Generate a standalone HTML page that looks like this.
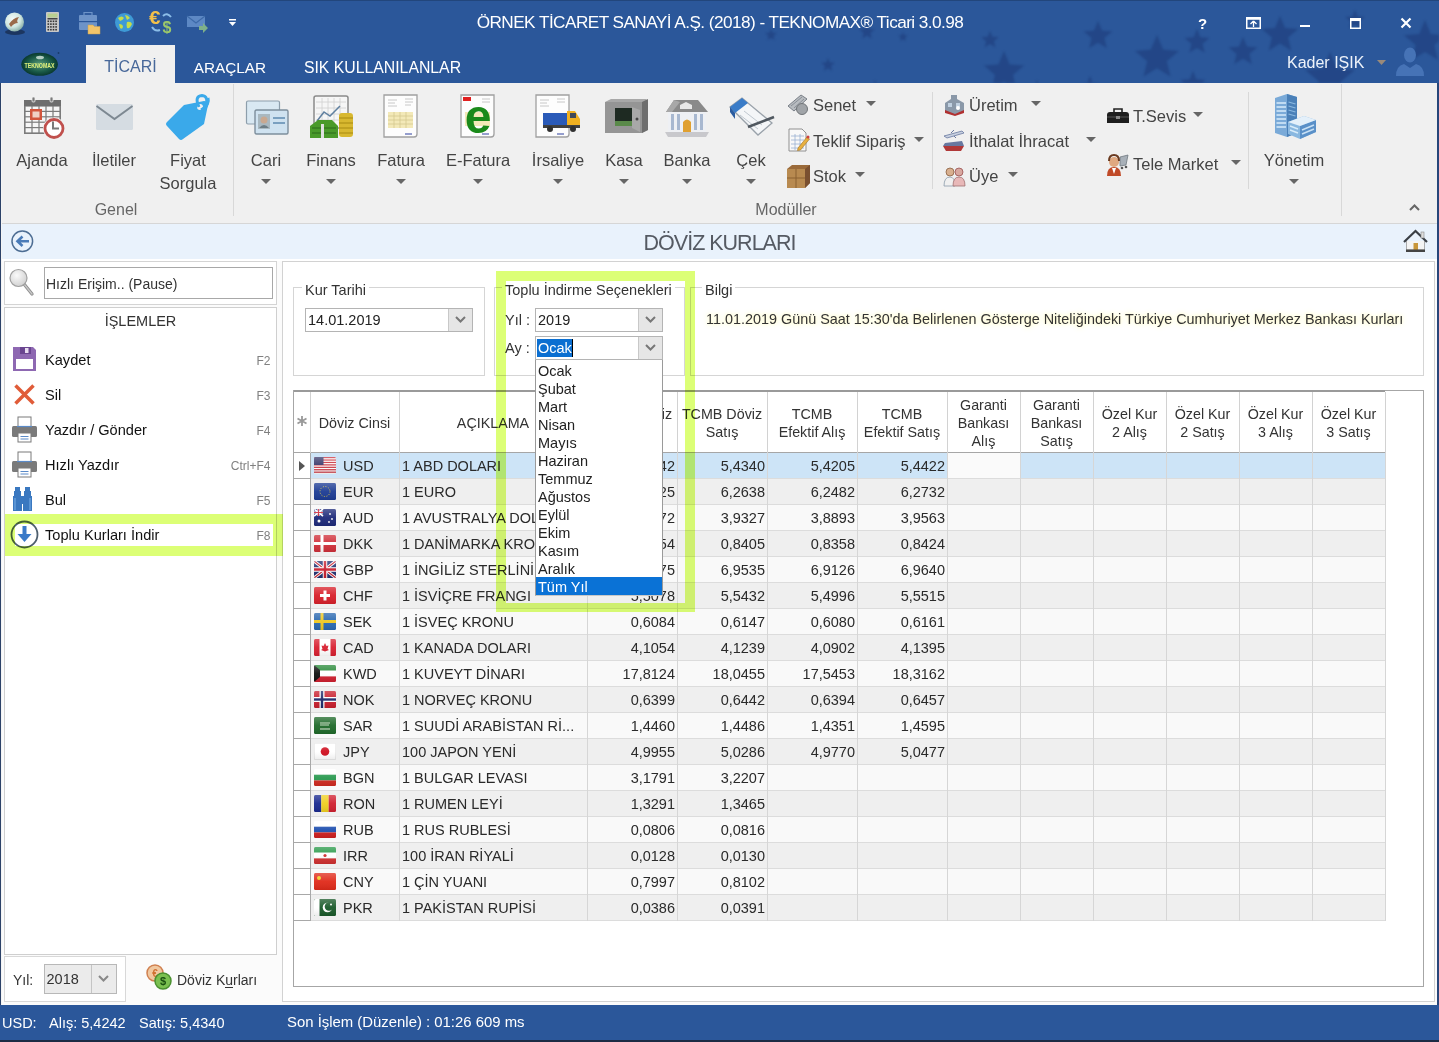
<!DOCTYPE html><html><head><meta charset="utf-8"><style>
html,body{margin:0;padding:0}
body{width:1439px;height:1042px;overflow:hidden;position:relative;background:#fff;font-family:"Liberation Sans",sans-serif}
.t{position:absolute;white-space:nowrap;line-height:1}
.r{position:absolute;box-sizing:border-box}
</style></head><body>
<div class="r" style="left:0px;top:0px;width:1439px;height:83px;background:#2b579a"></div>
<div class="r" style="left:0px;top:0px;width:1439px;height:1px;background:#22467c"></div>
<svg class="r" style="left:0px;top:0px;filter:blur(0.8px)" width="1439" height="83" viewBox="0 0 1439 83"><polygon points="771.0,29.0 772.6,32.8 776.7,33.1 773.6,35.8 774.5,39.9 771.0,37.7 767.5,39.9 768.4,35.8 765.3,33.1 769.4,32.8" fill="rgba(20,40,100,0.35)"/><polygon points="828.0,58.0 829.9,62.5 834.7,62.8 831.0,66.0 832.1,70.7 828.0,68.2 823.9,70.7 825.0,66.0 821.3,62.8 826.1,62.5" fill="rgba(20,40,100,0.35)"/><polygon points="875.0,80.0 876.6,83.8 880.7,84.1 877.6,86.8 878.5,90.9 875.0,88.7 871.5,90.9 872.4,86.8 869.3,84.1 873.4,83.8" fill="rgba(20,40,100,0.35)"/><polygon points="867.0,24.0 869.1,29.1 874.6,29.5 870.4,33.1 871.7,38.5 867.0,35.6 862.3,38.5 863.6,33.1 859.4,29.5 864.9,29.1" fill="rgba(20,40,100,0.35)"/><polygon points="903.0,32.0 904.3,35.2 907.8,35.5 905.1,37.7 905.9,41.0 903.0,39.2 900.1,41.0 900.9,37.7 898.2,35.5 901.7,35.2" fill="rgba(20,40,100,0.35)"/><polygon points="990.0,31.0 992.4,36.7 998.6,37.2 993.9,41.3 995.3,47.3 990.0,44.0 984.7,47.3 986.1,41.3 981.4,37.2 987.6,36.7" fill="rgba(20,40,100,0.35)"/><polygon points="1098.0,21.0 1102.0,30.5 1112.3,31.4 1104.4,38.1 1106.8,48.1 1098.0,42.8 1089.2,48.1 1091.6,38.1 1083.7,31.4 1094.0,30.5" fill="rgba(20,40,100,0.35)"/><polygon points="1157.0,35.0 1163.1,49.6 1178.9,50.9 1166.8,61.2 1170.5,76.6 1157.0,68.3 1143.5,76.6 1147.2,61.2 1135.1,50.9 1150.9,49.6" fill="rgba(20,40,100,0.35)"/><polygon points="1197.0,29.0 1200.4,37.3 1209.4,38.0 1202.6,43.8 1204.6,52.5 1197.0,47.9 1189.4,52.5 1191.4,43.8 1184.6,38.0 1193.6,37.3" fill="rgba(20,40,100,0.35)"/><polygon points="1004.0,51.0 1009.6,64.4 1024.0,65.5 1013.0,74.9 1016.3,89.0 1004.0,81.5 991.7,89.0 995.0,74.9 984.0,65.5 998.4,64.4" fill="rgba(20,40,100,0.35)"/><polygon points="1243.0,37.0 1247.0,46.5 1257.3,47.4 1249.4,54.1 1251.8,64.1 1243.0,58.8 1234.2,64.1 1236.6,54.1 1228.7,47.4 1239.0,46.5" fill="rgba(20,40,100,0.35)"/><polygon points="1280.0,16.0 1285.0,28.1 1298.1,29.1 1288.1,37.6 1291.2,50.4 1280.0,43.5 1268.8,50.4 1271.9,37.6 1261.9,29.1 1275.0,28.1" fill="rgba(20,40,100,0.35)"/><polygon points="1355.0,10.0 1357.6,16.4 1364.5,16.9 1359.3,21.4 1360.9,28.1 1355.0,24.5 1349.1,28.1 1350.7,21.4 1345.5,16.9 1352.4,16.4" fill="rgba(20,40,100,0.35)"/><polygon points="1330.0,52.0 1336.9,68.5 1354.7,70.0 1341.1,81.6 1345.3,99.0 1330.0,89.7 1314.7,99.0 1318.9,81.6 1305.3,70.0 1323.1,68.5" fill="rgba(20,40,100,0.35)"/><polygon points="1425.0,20.0 1430.8,34.0 1445.9,35.2 1434.4,45.1 1437.9,59.8 1425.0,51.9 1412.1,59.8 1415.6,45.1 1404.1,35.2 1419.2,34.0" fill="rgba(20,40,100,0.35)"/><polygon points="1193.0,71.0 1196.4,79.3 1205.4,80.0 1198.6,85.8 1200.6,94.5 1193.0,89.8 1185.4,94.5 1187.4,85.8 1180.6,80.0 1189.6,79.3" fill="rgba(20,40,100,0.35)"/><polygon points="1090.0,76.0 1092.6,82.4 1099.5,82.9 1094.3,87.4 1095.9,94.1 1090.0,90.5 1084.1,94.1 1085.7,87.4 1080.5,82.9 1087.4,82.4" fill="rgba(20,40,100,0.35)"/><polygon points="1037.0,80.0 1038.6,83.8 1042.7,84.1 1039.6,86.8 1040.5,90.9 1037.0,88.7 1033.5,90.9 1034.4,86.8 1031.3,84.1 1035.4,83.8" fill="rgba(20,40,100,0.35)"/></svg>
<div class="r" style="left:86px;top:45px;width:89px;height:38px;background:#f0f0f0"></div>
<div class="t" style="left:-169.50px;width:600px;text-align:center;top:59.46px;font-size:16px;color:#48689a;">TİCARİ</div>
<div class="t" style="left:-70.00px;width:600px;text-align:center;top:60.05px;font-size:15.3px;color:#fff;">ARAÇLAR</div>
<div class="t" style="left:82.50px;width:600px;text-align:center;top:59.63px;font-size:15.8px;color:#fff;">SIK KULLANILANLAR</div>
<div class="t" style="left:1287px;top:55.46px;font-size:16px;color:#eef3fa;">Kader IŞIK</div>
<svg class="r" style="left:1377.0px;top:60px;" width="9" height="5" viewBox="0 0 9 5"><path d="M0 0 L9 0 L4.5 5 Z" fill="#9a8a7a"/></svg>
<div class="t" style="left:320.00px;width:800px;text-align:center;top:14.44px;font-size:17.2px;color:#fff;letter-spacing:-0.55px">ÖRNEK TİCARET SANAYİ A.Ş. (2018) - TEKNOMAX® Ticari 3.0.98</div>
<div class="r" style="left:0px;top:83px;width:1439px;height:141px;background:#f0f0f0"></div>
<div class="r" style="left:0px;top:223px;width:1439px;height:1px;background:#d6d6d6"></div>
<div class="r" style="left:0px;top:83px;width:1px;height:959px;background:#2c4268"></div>
<div class="r" style="left:1px;top:83px;width:1px;height:922px;background:#f4f4f4"></div>
<div class="r" style="left:1437px;top:83px;width:2px;height:959px;background:#27467a"></div>
<div class="t" style="left:-258.00px;width:600px;text-align:center;top:152.03px;font-size:16.5px;color:#444;">Ajanda</div>
<div class="t" style="left:-186.00px;width:600px;text-align:center;top:152.03px;font-size:16.5px;color:#444;">İletiler</div>
<div class="t" style="left:-34.00px;width:600px;text-align:center;top:152.03px;font-size:16.5px;color:#444;">Cari</div>
<div class="t" style="left:31.00px;width:600px;text-align:center;top:152.03px;font-size:16.5px;color:#444;">Finans</div>
<div class="t" style="left:101.00px;width:600px;text-align:center;top:152.03px;font-size:16.5px;color:#444;">Fatura</div>
<div class="t" style="left:178.00px;width:600px;text-align:center;top:152.03px;font-size:16.5px;color:#444;">E-Fatura</div>
<div class="t" style="left:258.00px;width:600px;text-align:center;top:152.03px;font-size:16.5px;color:#444;">İrsaliye</div>
<div class="t" style="left:324.00px;width:600px;text-align:center;top:152.03px;font-size:16.5px;color:#444;">Kasa</div>
<div class="t" style="left:387.00px;width:600px;text-align:center;top:152.03px;font-size:16.5px;color:#444;">Banka</div>
<div class="t" style="left:451.00px;width:600px;text-align:center;top:152.03px;font-size:16.5px;color:#444;">Çek</div>
<div class="t" style="left:994.00px;width:600px;text-align:center;top:152.03px;font-size:16.5px;color:#444;">Yönetim</div>
<svg class="r" style="left:261.0px;top:179px;" width="10" height="5" viewBox="0 0 10 5"><path d="M0 0 L10 0 L5.0 5 Z" fill="#666"/></svg>
<svg class="r" style="left:326.0px;top:179px;" width="10" height="5" viewBox="0 0 10 5"><path d="M0 0 L10 0 L5.0 5 Z" fill="#666"/></svg>
<svg class="r" style="left:396.0px;top:179px;" width="10" height="5" viewBox="0 0 10 5"><path d="M0 0 L10 0 L5.0 5 Z" fill="#666"/></svg>
<svg class="r" style="left:473.0px;top:179px;" width="10" height="5" viewBox="0 0 10 5"><path d="M0 0 L10 0 L5.0 5 Z" fill="#666"/></svg>
<svg class="r" style="left:553.0px;top:179px;" width="10" height="5" viewBox="0 0 10 5"><path d="M0 0 L10 0 L5.0 5 Z" fill="#666"/></svg>
<svg class="r" style="left:619.0px;top:179px;" width="10" height="5" viewBox="0 0 10 5"><path d="M0 0 L10 0 L5.0 5 Z" fill="#666"/></svg>
<svg class="r" style="left:682.0px;top:179px;" width="10" height="5" viewBox="0 0 10 5"><path d="M0 0 L10 0 L5.0 5 Z" fill="#666"/></svg>
<svg class="r" style="left:746.0px;top:179px;" width="10" height="5" viewBox="0 0 10 5"><path d="M0 0 L10 0 L5.0 5 Z" fill="#666"/></svg>
<svg class="r" style="left:1289.0px;top:179px;" width="10" height="5" viewBox="0 0 10 5"><path d="M0 0 L10 0 L5.0 5 Z" fill="#666"/></svg>
<div class="t" style="left:-112.00px;width:600px;text-align:center;top:152.03px;font-size:16.5px;color:#444;">Fiyat</div>
<div class="t" style="left:-112.00px;width:600px;text-align:center;top:175.03px;font-size:16.5px;color:#444;">Sorgula</div>
<div class="t" style="left:-184.00px;width:600px;text-align:center;top:202.46px;font-size:16px;color:#666;">Genel</div>
<div class="t" style="left:486.00px;width:600px;text-align:center;top:202.46px;font-size:16px;color:#666;">Modüller</div>
<div class="r" style="left:233px;top:84px;width:1px;height:132px;background:#d8d8d8"></div>
<div class="r" style="left:932px;top:92px;width:1px;height:97px;background:#d8d8d8"></div>
<div class="r" style="left:1248px;top:92px;width:1px;height:97px;background:#d8d8d8"></div>
<div class="r" style="left:1341px;top:84px;width:1px;height:132px;background:#d8d8d8"></div>
<div class="t" style="left:813px;top:97.03px;font-size:16.5px;color:#444;">Senet</div>
<svg class="r" style="left:866.0px;top:101px;" width="10" height="5" viewBox="0 0 10 5"><path d="M0 0 L10 0 L5.0 5 Z" fill="#666"/></svg>
<div class="t" style="left:813px;top:133.03px;font-size:16.5px;color:#444;">Teklif Sipariş</div>
<svg class="r" style="left:914.0px;top:137px;" width="10" height="5" viewBox="0 0 10 5"><path d="M0 0 L10 0 L5.0 5 Z" fill="#666"/></svg>
<div class="t" style="left:813px;top:168.03px;font-size:16.5px;color:#444;">Stok</div>
<svg class="r" style="left:855.0px;top:172px;" width="10" height="5" viewBox="0 0 10 5"><path d="M0 0 L10 0 L5.0 5 Z" fill="#666"/></svg>
<div class="t" style="left:969px;top:97.03px;font-size:16.5px;color:#444;">Üretim</div>
<svg class="r" style="left:1031.0px;top:101px;" width="10" height="5" viewBox="0 0 10 5"><path d="M0 0 L10 0 L5.0 5 Z" fill="#666"/></svg>
<div class="t" style="left:969px;top:133.03px;font-size:16.5px;color:#444;">İthalat İhracat</div>
<svg class="r" style="left:1086.0px;top:137px;" width="10" height="5" viewBox="0 0 10 5"><path d="M0 0 L10 0 L5.0 5 Z" fill="#666"/></svg>
<div class="t" style="left:969px;top:168.03px;font-size:16.5px;color:#444;">Üye</div>
<svg class="r" style="left:1008.0px;top:172px;" width="10" height="5" viewBox="0 0 10 5"><path d="M0 0 L10 0 L5.0 5 Z" fill="#666"/></svg>
<div class="t" style="left:1133px;top:108.03px;font-size:16.5px;color:#444;">T.Sevis</div>
<svg class="r" style="left:1193.0px;top:112px;" width="10" height="5" viewBox="0 0 10 5"><path d="M0 0 L10 0 L5.0 5 Z" fill="#666"/></svg>
<div class="t" style="left:1133px;top:156.03px;font-size:16.5px;color:#444;">Tele Market</div>
<svg class="r" style="left:1231.0px;top:160px;" width="10" height="5" viewBox="0 0 10 5"><path d="M0 0 L10 0 L5.0 5 Z" fill="#666"/></svg>
<svg class="r" style="left:1409px;top:204px;" width="11" height="7" viewBox="0 0 11 7"><path d="M1 6 L5.5 1.5 L10 6" stroke="#666" stroke-width="2" fill="none"/></svg>
<div class="r" style="left:2px;top:224px;width:1435px;height:35px;background:#e9f2fc"></div>
<div class="t" style="left:419.50px;width:600px;text-align:center;top:232.80px;font-size:21.5px;color:#555a63;letter-spacing:-1px">DÖVİZ KURLARI</div>
<div class="r" style="left:2px;top:261px;width:1435px;height:744px;background:#fbfbfb"></div>
<div class="r" style="left:4px;top:261px;width:273px;height:44px;background:#fff;border:1px solid #d4d4d4"></div>
<div class="r" style="left:44px;top:267px;width:229px;height:32px;background:#fff;border:1px solid #a8a8a8"></div>
<div class="t" style="left:46px;top:277.15px;font-size:14px;color:#333;">Hızlı Erişim.. (Pause)</div>
<div class="r" style="left:4px;top:307px;width:273px;height:648px;background:#fff;border:1px solid #cfcfcf"></div>
<div class="t" style="left:-159.50px;width:600px;text-align:center;top:313.73px;font-size:14.5px;color:#333;">İŞLEMLER</div>
<div class="t" style="left:45px;top:352.64px;font-size:14.6px;color:#111;">Kaydet</div>
<div class="t" style="left:-329.50px;width:600px;text-align:right;top:354.84px;font-size:12px;color:#808080;">F2</div>
<div class="t" style="left:45px;top:387.64px;font-size:14.6px;color:#111;">Sil</div>
<div class="t" style="left:-329.50px;width:600px;text-align:right;top:389.84px;font-size:12px;color:#808080;">F3</div>
<div class="t" style="left:45px;top:422.64px;font-size:14.6px;color:#111;">Yazdır / Gönder</div>
<div class="t" style="left:-329.50px;width:600px;text-align:right;top:424.84px;font-size:12px;color:#808080;">F4</div>
<div class="t" style="left:45px;top:457.64px;font-size:14.6px;color:#111;">Hızlı Yazdır</div>
<div class="t" style="left:-329.50px;width:600px;text-align:right;top:459.84px;font-size:12px;color:#808080;">Ctrl+F4</div>
<div class="t" style="left:45px;top:492.64px;font-size:14.6px;color:#111;">Bul</div>
<div class="t" style="left:-329.50px;width:600px;text-align:right;top:494.84px;font-size:12px;color:#808080;">F5</div>
<div class="t" style="left:45px;top:527.64px;font-size:14.6px;color:#111;">Toplu Kurları İndir</div>
<div class="t" style="left:-329.50px;width:600px;text-align:right;top:529.84px;font-size:12px;color:#808080;">F8</div>
<div class="r" style="left:4px;top:956px;width:122px;height:46px;background:#fff;border:1px solid #d8d8d8"></div>
<div class="t" style="left:13px;top:973.15px;font-size:14px;color:#333;">Yıl:</div>
<div class="t" style="left:177px;top:973.15px;font-size:14px;color:#333;">Döviz Kurları</div>
<div class="r" style="left:282px;top:261px;width:1153px;height:741px;background:#fff;border:1px solid #d2d2d2"></div>
<div class="r" style="left:293px;top:287px;width:192px;height:89px;border:1px solid #d5d5d5"></div>
<div class="t" style="left:305px;top:282.73px;font-size:14.5px;color:#333;background:#fff;padding:0 3px;margin-left:-3px">Kur Tarihi</div>
<div class="r" style="left:494px;top:287px;width:191px;height:89px;border:1px solid #d5d5d5"></div>
<div class="t" style="left:505px;top:282.73px;font-size:14.5px;color:#333;background:#fff;padding:0 3px;margin-left:-3px">Toplu İndirme Seçenekleri</div>
<div class="r" style="left:690px;top:287px;width:734px;height:89px;border:1px solid #d5d5d5"></div>
<div class="t" style="left:705px;top:282.73px;font-size:14.5px;color:#333;background:#fff;padding:0 3px;margin-left:-3px">Bilgi</div>
<div class="r" style="left:305px;top:308px;width:168px;height:24px;background:#fff;border:1px solid #b4b4b4"></div>
<div class="r" style="left:448px;top:309px;width:24px;height:22px;background:#e6e6e6;border-left:1px solid #c8c8c8"></div>
<svg class="r" style="left:455px;top:316px;" width="11" height="7" viewBox="0 0 11 7"><path d="M1 1 L5.5 5.5 L10 1" stroke="#777" stroke-width="2" fill="none"/></svg>
<div class="t" style="left:308px;top:312.73px;font-size:14.5px;color:#222;">14.01.2019</div>
<div class="t" style="left:505px;top:312.73px;font-size:14.5px;color:#333;">Yıl :</div>
<div class="r" style="left:535px;top:308px;width:128px;height:24px;background:#fff;border:1px solid #b4b4b4"></div>
<div class="r" style="left:638px;top:309px;width:24px;height:22px;background:#e6e6e6;border-left:1px solid #c8c8c8"></div>
<svg class="r" style="left:645px;top:316px;" width="11" height="7" viewBox="0 0 11 7"><path d="M1 1 L5.5 5.5 L10 1" stroke="#777" stroke-width="2" fill="none"/></svg>
<div class="t" style="left:538px;top:312.73px;font-size:14.5px;color:#222;">2019</div>
<div class="t" style="left:505px;top:340.73px;font-size:14.5px;color:#333;">Ay :</div>
<div class="r" style="left:535px;top:336px;width:128px;height:24px;background:#fff;border:1px solid #b4b4b4"></div>
<div class="r" style="left:638px;top:337px;width:24px;height:22px;background:#e6e6e6;border-left:1px solid #c8c8c8"></div>
<svg class="r" style="left:645px;top:344px;" width="11" height="7" viewBox="0 0 11 7"><path d="M1 1 L5.5 5.5 L10 1" stroke="#777" stroke-width="2" fill="none"/></svg>
<div class="r" style="left:537px;top:339px;width:35px;height:18px;background:#0b6fd1"></div>
<div class="r" style="left:572px;top:339px;width:1px;height:18px;background:#000"></div>
<div class="t" style="left:538px;top:340.73px;font-size:14.5px;color:#fff;">Ocak</div>
<div class="t" style="left:706px;top:311.81px;font-size:14.4px;color:#333;text-shadow:0 0 3px #fff8c8,0 0 6px #fffad0,0 0 10px #fffbd8">11.01.2019 Günü Saat 15:30&#x27;da Belirlenen Gösterge Niteliğindeki Türkiye Cumhuriyet Merkez Bankası Kurları</div>
<div class="r" style="left:293px;top:390px;width:1131px;height:597px;background:#fff;border:1px solid #a6a6a6"></div>
<div class="r" style="left:294px;top:452px;width:1091px;height:1px;background:#a6a6a6"></div>
<div class="r" style="left:294px;top:390px;width:1091px;height:2px;background:#9a9a9a"></div>
<div class="r" style="left:310px;top:392px;width:1px;height:61px;background:#d2d2d2"></div>
<div class="r" style="left:399px;top:392px;width:1px;height:61px;background:#d2d2d2"></div>
<div class="r" style="left:587px;top:392px;width:1px;height:61px;background:#d2d2d2"></div>
<div class="r" style="left:677px;top:392px;width:1px;height:61px;background:#d2d2d2"></div>
<div class="r" style="left:767px;top:392px;width:1px;height:61px;background:#d2d2d2"></div>
<div class="r" style="left:857px;top:392px;width:1px;height:61px;background:#d2d2d2"></div>
<div class="r" style="left:947px;top:392px;width:1px;height:61px;background:#d2d2d2"></div>
<div class="r" style="left:1020px;top:392px;width:1px;height:61px;background:#d2d2d2"></div>
<div class="r" style="left:1093px;top:392px;width:1px;height:61px;background:#d2d2d2"></div>
<div class="r" style="left:1166px;top:392px;width:1px;height:61px;background:#d2d2d2"></div>
<div class="r" style="left:1239px;top:392px;width:1px;height:61px;background:#d2d2d2"></div>
<div class="r" style="left:1312px;top:392px;width:1px;height:61px;background:#d2d2d2"></div>
<div class="r" style="left:1385px;top:392px;width:1px;height:61px;background:#d2d2d2"></div>
<div class="t" style="left:254.50px;width:200px;text-align:center;top:415.90px;font-size:14.3px;color:#333;">Döviz Cinsi</div>
<div class="t" style="left:393.00px;width:200px;text-align:center;top:415.90px;font-size:14.3px;color:#333;">AÇIKLAMA</div>
<div class="t" style="left:532.00px;width:200px;text-align:center;top:406.90px;font-size:14.3px;color:#333;">TCMB Döviz</div>
<div class="t" style="left:532.00px;width:200px;text-align:center;top:424.90px;font-size:14.3px;color:#333;">Alış</div>
<div class="t" style="left:622.00px;width:200px;text-align:center;top:406.90px;font-size:14.3px;color:#333;">TCMB Döviz</div>
<div class="t" style="left:622.00px;width:200px;text-align:center;top:424.90px;font-size:14.3px;color:#333;">Satış</div>
<div class="t" style="left:712.00px;width:200px;text-align:center;top:406.90px;font-size:14.3px;color:#333;">TCMB</div>
<div class="t" style="left:712.00px;width:200px;text-align:center;top:424.90px;font-size:14.3px;color:#333;">Efektif Alış</div>
<div class="t" style="left:802.00px;width:200px;text-align:center;top:406.90px;font-size:14.3px;color:#333;">TCMB</div>
<div class="t" style="left:802.00px;width:200px;text-align:center;top:424.90px;font-size:14.3px;color:#333;">Efektif Satış</div>
<div class="t" style="left:883.50px;width:200px;text-align:center;top:397.90px;font-size:14.3px;color:#333;">Garanti</div>
<div class="t" style="left:883.50px;width:200px;text-align:center;top:415.90px;font-size:14.3px;color:#333;">Bankası</div>
<div class="t" style="left:883.50px;width:200px;text-align:center;top:433.90px;font-size:14.3px;color:#333;">Alış</div>
<div class="t" style="left:956.50px;width:200px;text-align:center;top:397.90px;font-size:14.3px;color:#333;">Garanti</div>
<div class="t" style="left:956.50px;width:200px;text-align:center;top:415.90px;font-size:14.3px;color:#333;">Bankası</div>
<div class="t" style="left:956.50px;width:200px;text-align:center;top:433.90px;font-size:14.3px;color:#333;">Satış</div>
<div class="t" style="left:1029.50px;width:200px;text-align:center;top:406.90px;font-size:14.3px;color:#333;">Özel Kur</div>
<div class="t" style="left:1029.50px;width:200px;text-align:center;top:424.90px;font-size:14.3px;color:#333;">2 Alış</div>
<div class="t" style="left:1102.50px;width:200px;text-align:center;top:406.90px;font-size:14.3px;color:#333;">Özel Kur</div>
<div class="t" style="left:1102.50px;width:200px;text-align:center;top:424.90px;font-size:14.3px;color:#333;">2 Satış</div>
<div class="t" style="left:1175.50px;width:200px;text-align:center;top:406.90px;font-size:14.3px;color:#333;">Özel Kur</div>
<div class="t" style="left:1175.50px;width:200px;text-align:center;top:424.90px;font-size:14.3px;color:#333;">3 Alış</div>
<div class="t" style="left:1248.50px;width:200px;text-align:center;top:406.90px;font-size:14.3px;color:#333;">Özel Kur</div>
<div class="t" style="left:1248.50px;width:200px;text-align:center;top:424.90px;font-size:14.3px;color:#333;">3 Satış</div>
<div class="r" style="left:310px;top:453px;width:1075px;height:26px;background:#cde4f7"></div>
<div class="r" style="left:948px;top:453px;width:72px;height:26px;background:#fafafa"></div>
<div class="r" style="left:310px;top:478px;width:1075px;height:1px;background:#dcdcdc"></div>
<div class="r" style="left:294px;top:478px;width:16px;height:1px;background:#a8a8a8"></div>
<div class="t" style="left:343px;top:459.23px;font-size:14.5px;color:#2a2a2a;">USD</div>
<div class="t" style="left:402px;top:459.23px;font-size:14.5px;color:#2a2a2a;">1 ABD DOLARI</div>
<div class="t" style="left:555.00px;width:120px;text-align:right;top:459.23px;font-size:14.5px;color:#2a2a2a;">5,4242</div>
<div class="t" style="left:645.00px;width:120px;text-align:right;top:459.23px;font-size:14.5px;color:#2a2a2a;">5,4340</div>
<div class="t" style="left:735.00px;width:120px;text-align:right;top:459.23px;font-size:14.5px;color:#2a2a2a;">5,4205</div>
<div class="t" style="left:825.00px;width:120px;text-align:right;top:459.23px;font-size:14.5px;color:#2a2a2a;">5,4422</div>
<div class="r" style="left:310px;top:479px;width:1075px;height:26px;background:#efefef"></div>
<div class="r" style="left:310px;top:504px;width:1075px;height:1px;background:#dcdcdc"></div>
<div class="r" style="left:294px;top:504px;width:16px;height:1px;background:#a8a8a8"></div>
<div class="t" style="left:343px;top:485.23px;font-size:14.5px;color:#2a2a2a;">EUR</div>
<div class="t" style="left:402px;top:485.23px;font-size:14.5px;color:#2a2a2a;">1 EURO</div>
<div class="t" style="left:555.00px;width:120px;text-align:right;top:485.23px;font-size:14.5px;color:#2a2a2a;">6,2325</div>
<div class="t" style="left:645.00px;width:120px;text-align:right;top:485.23px;font-size:14.5px;color:#2a2a2a;">6,2638</div>
<div class="t" style="left:735.00px;width:120px;text-align:right;top:485.23px;font-size:14.5px;color:#2a2a2a;">6,2482</div>
<div class="t" style="left:825.00px;width:120px;text-align:right;top:485.23px;font-size:14.5px;color:#2a2a2a;">6,2732</div>
<div class="r" style="left:310px;top:505px;width:1075px;height:26px;background:#f9f9f9"></div>
<div class="r" style="left:310px;top:530px;width:1075px;height:1px;background:#dcdcdc"></div>
<div class="r" style="left:294px;top:530px;width:16px;height:1px;background:#a8a8a8"></div>
<div class="t" style="left:343px;top:511.23px;font-size:14.5px;color:#2a2a2a;">AUD</div>
<div class="t" style="left:402px;top:511.23px;font-size:14.5px;color:#2a2a2a;">1 AVUSTRALYA DOLARI</div>
<div class="t" style="left:555.00px;width:120px;text-align:right;top:511.23px;font-size:14.5px;color:#2a2a2a;">3,9072</div>
<div class="t" style="left:645.00px;width:120px;text-align:right;top:511.23px;font-size:14.5px;color:#2a2a2a;">3,9327</div>
<div class="t" style="left:735.00px;width:120px;text-align:right;top:511.23px;font-size:14.5px;color:#2a2a2a;">3,8893</div>
<div class="t" style="left:825.00px;width:120px;text-align:right;top:511.23px;font-size:14.5px;color:#2a2a2a;">3,9563</div>
<div class="r" style="left:310px;top:531px;width:1075px;height:26px;background:#efefef"></div>
<div class="r" style="left:310px;top:556px;width:1075px;height:1px;background:#dcdcdc"></div>
<div class="r" style="left:294px;top:556px;width:16px;height:1px;background:#a8a8a8"></div>
<div class="t" style="left:343px;top:537.23px;font-size:14.5px;color:#2a2a2a;">DKK</div>
<div class="t" style="left:402px;top:537.23px;font-size:14.5px;color:#2a2a2a;">1 DANİMARKA KRONU</div>
<div class="t" style="left:555.00px;width:120px;text-align:right;top:537.23px;font-size:14.5px;color:#2a2a2a;">0,8354</div>
<div class="t" style="left:645.00px;width:120px;text-align:right;top:537.23px;font-size:14.5px;color:#2a2a2a;">0,8405</div>
<div class="t" style="left:735.00px;width:120px;text-align:right;top:537.23px;font-size:14.5px;color:#2a2a2a;">0,8358</div>
<div class="t" style="left:825.00px;width:120px;text-align:right;top:537.23px;font-size:14.5px;color:#2a2a2a;">0,8424</div>
<div class="r" style="left:310px;top:557px;width:1075px;height:26px;background:#f9f9f9"></div>
<div class="r" style="left:310px;top:582px;width:1075px;height:1px;background:#dcdcdc"></div>
<div class="r" style="left:294px;top:582px;width:16px;height:1px;background:#a8a8a8"></div>
<div class="t" style="left:343px;top:563.23px;font-size:14.5px;color:#2a2a2a;">GBP</div>
<div class="t" style="left:402px;top:563.23px;font-size:14.5px;color:#2a2a2a;">1 İNGİLİZ STERLİNİ</div>
<div class="t" style="left:555.00px;width:120px;text-align:right;top:563.23px;font-size:14.5px;color:#2a2a2a;">6,9075</div>
<div class="t" style="left:645.00px;width:120px;text-align:right;top:563.23px;font-size:14.5px;color:#2a2a2a;">6,9535</div>
<div class="t" style="left:735.00px;width:120px;text-align:right;top:563.23px;font-size:14.5px;color:#2a2a2a;">6,9126</div>
<div class="t" style="left:825.00px;width:120px;text-align:right;top:563.23px;font-size:14.5px;color:#2a2a2a;">6,9640</div>
<div class="r" style="left:310px;top:583px;width:1075px;height:26px;background:#efefef"></div>
<div class="r" style="left:310px;top:608px;width:1075px;height:1px;background:#dcdcdc"></div>
<div class="r" style="left:294px;top:608px;width:16px;height:1px;background:#a8a8a8"></div>
<div class="t" style="left:343px;top:589.23px;font-size:14.5px;color:#2a2a2a;">CHF</div>
<div class="t" style="left:402px;top:589.23px;font-size:14.5px;color:#2a2a2a;">1 İSVİÇRE FRANGI</div>
<div class="t" style="left:555.00px;width:120px;text-align:right;top:589.23px;font-size:14.5px;color:#2a2a2a;">5,5078</div>
<div class="t" style="left:645.00px;width:120px;text-align:right;top:589.23px;font-size:14.5px;color:#2a2a2a;">5,5432</div>
<div class="t" style="left:735.00px;width:120px;text-align:right;top:589.23px;font-size:14.5px;color:#2a2a2a;">5,4996</div>
<div class="t" style="left:825.00px;width:120px;text-align:right;top:589.23px;font-size:14.5px;color:#2a2a2a;">5,5515</div>
<div class="r" style="left:310px;top:609px;width:1075px;height:26px;background:#f9f9f9"></div>
<div class="r" style="left:310px;top:634px;width:1075px;height:1px;background:#dcdcdc"></div>
<div class="r" style="left:294px;top:634px;width:16px;height:1px;background:#a8a8a8"></div>
<div class="t" style="left:343px;top:615.23px;font-size:14.5px;color:#2a2a2a;">SEK</div>
<div class="t" style="left:402px;top:615.23px;font-size:14.5px;color:#2a2a2a;">1 İSVEÇ KRONU</div>
<div class="t" style="left:555.00px;width:120px;text-align:right;top:615.23px;font-size:14.5px;color:#2a2a2a;">0,6084</div>
<div class="t" style="left:645.00px;width:120px;text-align:right;top:615.23px;font-size:14.5px;color:#2a2a2a;">0,6147</div>
<div class="t" style="left:735.00px;width:120px;text-align:right;top:615.23px;font-size:14.5px;color:#2a2a2a;">0,6080</div>
<div class="t" style="left:825.00px;width:120px;text-align:right;top:615.23px;font-size:14.5px;color:#2a2a2a;">0,6161</div>
<div class="r" style="left:310px;top:635px;width:1075px;height:26px;background:#efefef"></div>
<div class="r" style="left:310px;top:660px;width:1075px;height:1px;background:#dcdcdc"></div>
<div class="r" style="left:294px;top:660px;width:16px;height:1px;background:#a8a8a8"></div>
<div class="t" style="left:343px;top:641.23px;font-size:14.5px;color:#2a2a2a;">CAD</div>
<div class="t" style="left:402px;top:641.23px;font-size:14.5px;color:#2a2a2a;">1 KANADA DOLARI</div>
<div class="t" style="left:555.00px;width:120px;text-align:right;top:641.23px;font-size:14.5px;color:#2a2a2a;">4,1054</div>
<div class="t" style="left:645.00px;width:120px;text-align:right;top:641.23px;font-size:14.5px;color:#2a2a2a;">4,1239</div>
<div class="t" style="left:735.00px;width:120px;text-align:right;top:641.23px;font-size:14.5px;color:#2a2a2a;">4,0902</div>
<div class="t" style="left:825.00px;width:120px;text-align:right;top:641.23px;font-size:14.5px;color:#2a2a2a;">4,1395</div>
<div class="r" style="left:310px;top:661px;width:1075px;height:26px;background:#f9f9f9"></div>
<div class="r" style="left:310px;top:686px;width:1075px;height:1px;background:#dcdcdc"></div>
<div class="r" style="left:294px;top:686px;width:16px;height:1px;background:#a8a8a8"></div>
<div class="t" style="left:343px;top:667.23px;font-size:14.5px;color:#2a2a2a;">KWD</div>
<div class="t" style="left:402px;top:667.23px;font-size:14.5px;color:#2a2a2a;">1 KUVEYT DİNARI</div>
<div class="t" style="left:555.00px;width:120px;text-align:right;top:667.23px;font-size:14.5px;color:#2a2a2a;">17,8124</div>
<div class="t" style="left:645.00px;width:120px;text-align:right;top:667.23px;font-size:14.5px;color:#2a2a2a;">18,0455</div>
<div class="t" style="left:735.00px;width:120px;text-align:right;top:667.23px;font-size:14.5px;color:#2a2a2a;">17,5453</div>
<div class="t" style="left:825.00px;width:120px;text-align:right;top:667.23px;font-size:14.5px;color:#2a2a2a;">18,3162</div>
<div class="r" style="left:310px;top:687px;width:1075px;height:26px;background:#efefef"></div>
<div class="r" style="left:310px;top:712px;width:1075px;height:1px;background:#dcdcdc"></div>
<div class="r" style="left:294px;top:712px;width:16px;height:1px;background:#a8a8a8"></div>
<div class="t" style="left:343px;top:693.23px;font-size:14.5px;color:#2a2a2a;">NOK</div>
<div class="t" style="left:402px;top:693.23px;font-size:14.5px;color:#2a2a2a;">1 NORVEÇ KRONU</div>
<div class="t" style="left:555.00px;width:120px;text-align:right;top:693.23px;font-size:14.5px;color:#2a2a2a;">0,6399</div>
<div class="t" style="left:645.00px;width:120px;text-align:right;top:693.23px;font-size:14.5px;color:#2a2a2a;">0,6442</div>
<div class="t" style="left:735.00px;width:120px;text-align:right;top:693.23px;font-size:14.5px;color:#2a2a2a;">0,6394</div>
<div class="t" style="left:825.00px;width:120px;text-align:right;top:693.23px;font-size:14.5px;color:#2a2a2a;">0,6457</div>
<div class="r" style="left:310px;top:713px;width:1075px;height:26px;background:#f9f9f9"></div>
<div class="r" style="left:310px;top:738px;width:1075px;height:1px;background:#dcdcdc"></div>
<div class="r" style="left:294px;top:738px;width:16px;height:1px;background:#a8a8a8"></div>
<div class="t" style="left:343px;top:719.23px;font-size:14.5px;color:#2a2a2a;">SAR</div>
<div class="t" style="left:402px;top:719.23px;font-size:14.5px;color:#2a2a2a;">1 SUUDİ ARABİSTAN Rİ...</div>
<div class="t" style="left:555.00px;width:120px;text-align:right;top:719.23px;font-size:14.5px;color:#2a2a2a;">1,4460</div>
<div class="t" style="left:645.00px;width:120px;text-align:right;top:719.23px;font-size:14.5px;color:#2a2a2a;">1,4486</div>
<div class="t" style="left:735.00px;width:120px;text-align:right;top:719.23px;font-size:14.5px;color:#2a2a2a;">1,4351</div>
<div class="t" style="left:825.00px;width:120px;text-align:right;top:719.23px;font-size:14.5px;color:#2a2a2a;">1,4595</div>
<div class="r" style="left:310px;top:739px;width:1075px;height:26px;background:#efefef"></div>
<div class="r" style="left:310px;top:764px;width:1075px;height:1px;background:#dcdcdc"></div>
<div class="r" style="left:294px;top:764px;width:16px;height:1px;background:#a8a8a8"></div>
<div class="t" style="left:343px;top:745.23px;font-size:14.5px;color:#2a2a2a;">JPY</div>
<div class="t" style="left:402px;top:745.23px;font-size:14.5px;color:#2a2a2a;">100 JAPON YENİ</div>
<div class="t" style="left:555.00px;width:120px;text-align:right;top:745.23px;font-size:14.5px;color:#2a2a2a;">4,9955</div>
<div class="t" style="left:645.00px;width:120px;text-align:right;top:745.23px;font-size:14.5px;color:#2a2a2a;">5,0286</div>
<div class="t" style="left:735.00px;width:120px;text-align:right;top:745.23px;font-size:14.5px;color:#2a2a2a;">4,9770</div>
<div class="t" style="left:825.00px;width:120px;text-align:right;top:745.23px;font-size:14.5px;color:#2a2a2a;">5,0477</div>
<div class="r" style="left:310px;top:765px;width:1075px;height:26px;background:#f9f9f9"></div>
<div class="r" style="left:310px;top:790px;width:1075px;height:1px;background:#dcdcdc"></div>
<div class="r" style="left:294px;top:790px;width:16px;height:1px;background:#a8a8a8"></div>
<div class="t" style="left:343px;top:771.23px;font-size:14.5px;color:#2a2a2a;">BGN</div>
<div class="t" style="left:402px;top:771.23px;font-size:14.5px;color:#2a2a2a;">1 BULGAR LEVASI</div>
<div class="t" style="left:555.00px;width:120px;text-align:right;top:771.23px;font-size:14.5px;color:#2a2a2a;">3,1791</div>
<div class="t" style="left:645.00px;width:120px;text-align:right;top:771.23px;font-size:14.5px;color:#2a2a2a;">3,2207</div>
<div class="r" style="left:310px;top:791px;width:1075px;height:26px;background:#efefef"></div>
<div class="r" style="left:310px;top:816px;width:1075px;height:1px;background:#dcdcdc"></div>
<div class="r" style="left:294px;top:816px;width:16px;height:1px;background:#a8a8a8"></div>
<div class="t" style="left:343px;top:797.23px;font-size:14.5px;color:#2a2a2a;">RON</div>
<div class="t" style="left:402px;top:797.23px;font-size:14.5px;color:#2a2a2a;">1 RUMEN LEYİ</div>
<div class="t" style="left:555.00px;width:120px;text-align:right;top:797.23px;font-size:14.5px;color:#2a2a2a;">1,3291</div>
<div class="t" style="left:645.00px;width:120px;text-align:right;top:797.23px;font-size:14.5px;color:#2a2a2a;">1,3465</div>
<div class="r" style="left:310px;top:817px;width:1075px;height:26px;background:#f9f9f9"></div>
<div class="r" style="left:310px;top:842px;width:1075px;height:1px;background:#dcdcdc"></div>
<div class="r" style="left:294px;top:842px;width:16px;height:1px;background:#a8a8a8"></div>
<div class="t" style="left:343px;top:823.23px;font-size:14.5px;color:#2a2a2a;">RUB</div>
<div class="t" style="left:402px;top:823.23px;font-size:14.5px;color:#2a2a2a;">1 RUS RUBLESİ</div>
<div class="t" style="left:555.00px;width:120px;text-align:right;top:823.23px;font-size:14.5px;color:#2a2a2a;">0,0806</div>
<div class="t" style="left:645.00px;width:120px;text-align:right;top:823.23px;font-size:14.5px;color:#2a2a2a;">0,0816</div>
<div class="r" style="left:310px;top:843px;width:1075px;height:26px;background:#efefef"></div>
<div class="r" style="left:310px;top:868px;width:1075px;height:1px;background:#dcdcdc"></div>
<div class="r" style="left:294px;top:868px;width:16px;height:1px;background:#a8a8a8"></div>
<div class="t" style="left:343px;top:849.23px;font-size:14.5px;color:#2a2a2a;">IRR</div>
<div class="t" style="left:402px;top:849.23px;font-size:14.5px;color:#2a2a2a;">100 İRAN RİYALİ</div>
<div class="t" style="left:555.00px;width:120px;text-align:right;top:849.23px;font-size:14.5px;color:#2a2a2a;">0,0128</div>
<div class="t" style="left:645.00px;width:120px;text-align:right;top:849.23px;font-size:14.5px;color:#2a2a2a;">0,0130</div>
<div class="r" style="left:310px;top:869px;width:1075px;height:26px;background:#f9f9f9"></div>
<div class="r" style="left:310px;top:894px;width:1075px;height:1px;background:#dcdcdc"></div>
<div class="r" style="left:294px;top:894px;width:16px;height:1px;background:#a8a8a8"></div>
<div class="t" style="left:343px;top:875.23px;font-size:14.5px;color:#2a2a2a;">CNY</div>
<div class="t" style="left:402px;top:875.23px;font-size:14.5px;color:#2a2a2a;">1 ÇİN YUANI</div>
<div class="t" style="left:555.00px;width:120px;text-align:right;top:875.23px;font-size:14.5px;color:#2a2a2a;">0,7997</div>
<div class="t" style="left:645.00px;width:120px;text-align:right;top:875.23px;font-size:14.5px;color:#2a2a2a;">0,8102</div>
<div class="r" style="left:310px;top:895px;width:1075px;height:26px;background:#efefef"></div>
<div class="r" style="left:310px;top:920px;width:1075px;height:1px;background:#dcdcdc"></div>
<div class="r" style="left:294px;top:920px;width:16px;height:1px;background:#a8a8a8"></div>
<div class="t" style="left:343px;top:901.23px;font-size:14.5px;color:#2a2a2a;">PKR</div>
<div class="t" style="left:402px;top:901.23px;font-size:14.5px;color:#2a2a2a;">1 PAKİSTAN RUPİSİ</div>
<div class="t" style="left:555.00px;width:120px;text-align:right;top:901.23px;font-size:14.5px;color:#2a2a2a;">0,0386</div>
<div class="t" style="left:645.00px;width:120px;text-align:right;top:901.23px;font-size:14.5px;color:#2a2a2a;">0,0391</div>
<div class="r" style="left:310px;top:453px;width:1px;height:468px;background:#a8a8a8"></div>
<div class="r" style="left:399px;top:453px;width:1px;height:468px;background:#d6d6d6"></div>
<div class="r" style="left:587px;top:453px;width:1px;height:468px;background:#d6d6d6"></div>
<div class="r" style="left:677px;top:453px;width:1px;height:468px;background:#d6d6d6"></div>
<div class="r" style="left:767px;top:453px;width:1px;height:468px;background:#d6d6d6"></div>
<div class="r" style="left:857px;top:453px;width:1px;height:468px;background:#d6d6d6"></div>
<div class="r" style="left:947px;top:453px;width:1px;height:468px;background:#d6d6d6"></div>
<div class="r" style="left:1020px;top:453px;width:1px;height:468px;background:#d6d6d6"></div>
<div class="r" style="left:1093px;top:453px;width:1px;height:468px;background:#d6d6d6"></div>
<div class="r" style="left:1166px;top:453px;width:1px;height:468px;background:#d6d6d6"></div>
<div class="r" style="left:1239px;top:453px;width:1px;height:468px;background:#d6d6d6"></div>
<div class="r" style="left:1312px;top:453px;width:1px;height:468px;background:#d6d6d6"></div>
<div class="r" style="left:1385px;top:453px;width:1px;height:468px;background:#d6d6d6"></div>
<svg class="r" style="left:299px;top:461px;" width="6" height="10" viewBox="0 0 6 10"><path d="M0 0 L6 5 L0 10 Z" fill="#555"/></svg>
<div class="r" style="left:535px;top:360px;width:128px;height:236px;background:#fff;border:1px solid #9a9a9a;border-top:none;border-bottom-color:#c8c8c8"></div>
<div class="r" style="left:536px;top:577px;width:126px;height:18px;background:#0a72d6"></div>
<div class="t" style="left:538px;top:363.73px;font-size:14.5px;color:#222;">Ocak</div>
<div class="t" style="left:538px;top:381.73px;font-size:14.5px;color:#222;">Şubat</div>
<div class="t" style="left:538px;top:399.73px;font-size:14.5px;color:#222;">Mart</div>
<div class="t" style="left:538px;top:417.73px;font-size:14.5px;color:#222;">Nisan</div>
<div class="t" style="left:538px;top:435.73px;font-size:14.5px;color:#222;">Mayıs</div>
<div class="t" style="left:538px;top:453.73px;font-size:14.5px;color:#222;">Haziran</div>
<div class="t" style="left:538px;top:471.73px;font-size:14.5px;color:#222;">Temmuz</div>
<div class="t" style="left:538px;top:489.73px;font-size:14.5px;color:#222;">Ağustos</div>
<div class="t" style="left:538px;top:507.73px;font-size:14.5px;color:#222;">Eylül</div>
<div class="t" style="left:538px;top:525.73px;font-size:14.5px;color:#222;">Ekim</div>
<div class="t" style="left:538px;top:543.73px;font-size:14.5px;color:#222;">Kasım</div>
<div class="t" style="left:538px;top:561.73px;font-size:14.5px;color:#222;">Aralık</div>
<div class="t" style="left:538px;top:579.73px;font-size:14.5px;color:#fff;">Tüm Yıl</div>
<div class="r" style="left:0px;top:1005px;width:1439px;height:35px;background:#2b579a"></div>
<div class="r" style="left:0px;top:1040px;width:1439px;height:2px;background:#1c2b44"></div>
<div class="t" style="left:2px;top:1015.73px;font-size:14.5px;color:#fff;">USD:</div>
<div class="t" style="left:49px;top:1015.73px;font-size:14.5px;color:#fff;">Alış: 5,4242</div>
<div class="t" style="left:139px;top:1015.73px;font-size:14.5px;color:#fff;">Satış: 5,4340</div>
<div class="t" style="left:287px;top:1015.39px;font-size:14.9px;color:#fff;">Son İşlem (Düzenle) : 01:26 609 ms</div>
<svg class="r" style="left:3px;top:10px;" width="24" height="26" viewBox="0 0 24 26"><defs><radialGradient id="lg" cx="0.4" cy="0.35" r="0.7"><stop offset="0" stop-color="#f4fbf8"/><stop offset="0.6" stop-color="#cfe6e0"/><stop offset="1" stop-color="#7fa7a0"/></radialGradient></defs>
      <ellipse cx="12" cy="22" rx="10" ry="3" fill="#1c3660"/>
      <circle cx="11.5" cy="12" r="9.5" fill="url(#lg)"/>
      <path d="M6 14 Q10 8 16 7 Q13 11 15 13 Q11 13 8 17 Z" fill="#9a6a4a"/></svg>
<svg class="r" style="left:46px;top:12px;" width="13" height="20" viewBox="0 0 13 20"><rect x="0" y="0" width="13" height="20" rx="1" fill="#c8c8c8"/><rect x="1.5" y="1.5" width="10" height="4" fill="#b8d090"/>
      <rect x="1.5" y="6" width="10" height="1.5" fill="#444"/><rect x="1.5" y="8.5" width="1.6" height="1.6" fill="#333"/><rect x="4.1" y="8.5" width="1.6" height="1.6" fill="#333"/><rect x="6.7" y="8.5" width="1.6" height="1.6" fill="#333"/><rect x="9.3" y="8.5" width="1.6" height="1.6" fill="#333"/><rect x="1.5" y="11.3" width="1.6" height="1.6" fill="#333"/><rect x="4.1" y="11.3" width="1.6" height="1.6" fill="#333"/><rect x="6.7" y="11.3" width="1.6" height="1.6" fill="#333"/><rect x="9.3" y="11.3" width="1.6" height="1.6" fill="#333"/><rect x="1.5" y="14.1" width="1.6" height="1.6" fill="#333"/><rect x="4.1" y="14.1" width="1.6" height="1.6" fill="#333"/><rect x="6.7" y="14.1" width="1.6" height="1.6" fill="#333"/><rect x="9.3" y="14.1" width="1.6" height="1.6" fill="#333"/><rect x="1.5" y="16.9" width="1.6" height="1.6" fill="#333"/><rect x="4.1" y="16.9" width="1.6" height="1.6" fill="#333"/><rect x="6.7" y="16.9" width="1.6" height="1.6" fill="#333"/><rect x="9.3" y="16.9" width="1.6" height="1.6" fill="#333"/></svg>
<svg class="r" style="left:78px;top:12px;" width="24" height="24" viewBox="0 0 24 24"><rect x="1" y="3" width="18" height="15" rx="1" fill="#6d93c8"/><rect x="6" y="0.5" width="8" height="3" fill="none" stroke="#6d93c8" stroke-width="1.2"/>
      <rect x="1" y="9" width="18" height="1.2" fill="#2b579a"/>
      <path d="M10 13 h5 l1.5 1.5 H22 V22 H10 Z" fill="#f2c46a" stroke="#c8a050" stroke-width="0.5"/></svg>
<svg class="r" style="left:114px;top:12px;" width="21" height="21" viewBox="0 0 21 21"><circle cx="10.5" cy="10.5" r="9.5" fill="#3e9ad6"/>
      <path d="M4 6 Q8 3 10 6 Q8 9 6 9 Z M11 3 Q14 3 16 6 L13 8 Z M13 10 Q17 9 18 12 Q16 17 13 16 Q12 13 13 10 Z M5 12 Q9 12 9 15 Q8 18 6 16 Z" fill="#c6dc4a"/></svg>
<svg class="r" style="left:149px;top:10px;" width="25" height="24" viewBox="0 0 25 24"><text x="0" y="14" font-family="Liberation Sans" font-weight="bold" font-size="18" fill="#f2c04a" textLength="11.5" lengthAdjust="spacingAndGlyphs">€</text>
      <text x="13.5" y="22.5" font-family="Liberation Sans" font-weight="bold" font-size="16" fill="#9cc86a">$</text>
      <path d="M14 6 Q18 2 22 7" stroke="#8bbde8" stroke-width="2" fill="none"/><path d="M3 17 Q6 22 11 20" stroke="#8bbde8" stroke-width="2" fill="none"/></svg>
<svg class="r" style="left:186px;top:14px;" width="22" height="20" viewBox="0 0 22 20"><rect x="1" y="2" width="18" height="11" fill="#5d88c4"/><path d="M1 2 L10 9 L19 2" stroke="#3d6aa8" stroke-width="1.2" fill="none"/>
      <path d="M13 12 h4 v-3 l5 5 -5 5 v-3 h-4 Z" fill="#7eb08a"/></svg>
<svg class="r" style="left:228px;top:18px;" width="9" height="9" viewBox="0 0 9 9"><rect x="1" y="1" width="7" height="1.5" fill="#fff"/><path d="M1 4 L8 4 L4.5 8 Z" fill="#fff"/></svg>
<div class="t" style="left:1192.50px;width:20px;text-align:center;top:15.80px;font-size:15px;color:#fff;font-weight:bold">?</div>
<svg class="r" style="left:1246px;top:17px;" width="15" height="12" viewBox="0 0 15 12"><rect x="0.75" y="0.75" width="13.5" height="10.5" fill="none" stroke="#fff" stroke-width="1.5"/><rect x="0.75" y="0.75" width="13.5" height="2" fill="#fff"/><path d="M7.5 4 L4.5 7 M7.5 4 L10.5 7 M7.5 4 V10" stroke="#fff" stroke-width="1.3"/></svg>
<div class="r" style="left:1300px;top:25px;width:10px;height:2px;background:#fff"></div>
<svg class="r" style="left:1350px;top:18px;" width="11" height="11" viewBox="0 0 11 11"><rect x="0.75" y="0.75" width="9.5" height="9.5" fill="none" stroke="#fff" stroke-width="1.5"/><rect x="0.75" y="0.75" width="9.5" height="2.3" fill="#fff"/></svg>
<svg class="r" style="left:1400px;top:17px;" width="12" height="12" viewBox="0 0 12 12"><path d="M1.5 1.5 L10.5 10.5 M10.5 1.5 L1.5 10.5" stroke="#fff" stroke-width="2.2"/></svg>
<svg class="r" style="left:1394px;top:44px;" width="33" height="33" viewBox="0 0 33 33"><ellipse cx="16" cy="11" rx="6" ry="7.5" fill="#4673b6"/><path d="M2 32 Q2 22 10 20 L16 24 L22 20 Q30 22 30 32 Z" fill="#4673b6"/></svg>
<svg class="r" style="left:19px;top:50px;" width="42" height="28" viewBox="0 0 42 28"><defs><radialGradient id="tg" cx="0.5" cy="0.5" r="0.55"><stop offset="0" stop-color="#5a9a7a"/><stop offset="0.6" stop-color="#1a5a48"/><stop offset="0.9" stop-color="#0a3a30"/><stop offset="1" stop-color="#0e4a3a"/></radialGradient></defs>
      <ellipse cx="20.6" cy="14.3" rx="18.3" ry="11.5" fill="url(#tg)"/>
      <ellipse cx="21" cy="7.5" rx="4" ry="1.8" fill="#d8e8e0" opacity="0.8"/>
      <text x="20.6" y="17.8" text-anchor="middle" font-family="Liberation Sans" font-weight="bold" font-size="8" fill="#e4f27a" textLength="30" lengthAdjust="spacingAndGlyphs">TEKNOMAX</text>
      <circle cx="39.5" cy="3" r="0.9" fill="#1a3a6a"/></svg>
<svg class="r" style="left:24px;top:97px;" width="42" height="45" viewBox="0 0 42 45"><rect x="0" y="3" width="37" height="34" fill="#7b7b7b"/><rect x="0" y="3" width="37" height="6" fill="#6e6e6e"/><rect x="1.6" y="9.6" width="5.8" height="4.2" fill="#f6f6f6"/><rect x="8.6" y="9.6" width="5.8" height="4.2" fill="#f6f6f6"/><rect x="15.6" y="9.6" width="5.8" height="4.2" fill="#f6f6f6"/><rect x="22.6" y="9.6" width="5.8" height="4.2" fill="#f6f6f6"/><rect x="29.6" y="9.6" width="5.8" height="4.2" fill="#f6f6f6"/><rect x="1.6" y="15.0" width="5.8" height="4.2" fill="#f6f6f6"/><rect x="8.6" y="15.0" width="5.8" height="4.2" fill="#f6f6f6"/><rect x="15.6" y="15.0" width="5.8" height="4.2" fill="#f6f6f6"/><rect x="22.6" y="15.0" width="5.8" height="4.2" fill="#f6f6f6"/><rect x="29.6" y="15.0" width="5.8" height="4.2" fill="#f6f6f6"/><rect x="1.6" y="20.4" width="5.8" height="4.2" fill="#f6f6f6"/><rect x="8.6" y="20.4" width="5.8" height="4.2" fill="#f6f6f6"/><rect x="15.6" y="20.4" width="5.8" height="4.2" fill="#f6f6f6"/><rect x="22.6" y="20.4" width="5.8" height="4.2" fill="#f6f6f6"/><rect x="29.6" y="20.4" width="5.8" height="4.2" fill="#f6f6f6"/><rect x="1.6" y="25.8" width="5.8" height="4.2" fill="#f6f6f6"/><rect x="8.6" y="25.8" width="5.8" height="4.2" fill="#f6f6f6"/><rect x="15.6" y="25.8" width="5.8" height="4.2" fill="#f6f6f6"/><rect x="22.6" y="25.8" width="5.8" height="4.2" fill="#f6f6f6"/><rect x="29.6" y="25.8" width="5.8" height="4.2" fill="#f6f6f6"/><rect x="1.6" y="31.2" width="5.8" height="4.2" fill="#f6f6f6"/><rect x="8.6" y="31.2" width="5.8" height="4.2" fill="#f6f6f6"/><rect x="15.6" y="31.2" width="5.8" height="4.2" fill="#f6f6f6"/><rect x="22.6" y="31.2" width="5.8" height="4.2" fill="#f6f6f6"/><rect x="29.6" y="31.2" width="5.8" height="4.2" fill="#f6f6f6"/><rect x="8" y="0" width="3" height="5" rx="1" fill="#7b7b7b" stroke="#f0f0f0" stroke-width="0.8"/><rect x="26" y="0" width="3" height="5" rx="1" fill="#7b7b7b" stroke="#f0f0f0" stroke-width="0.8"/><rect x="6" y="12" width="12" height="11" fill="#d2553c"/><rect x="8.5" y="14.5" width="7" height="6" fill="#f0d0c4"/><circle cx="30" cy="31.5" r="11" fill="#f0f0f0"/><circle cx="30" cy="31.5" r="9" fill="#fff" stroke="#c0504d" stroke-width="2.8"/><path d="M29 24.5 V31.5 H35" stroke="#7a7a7a" stroke-width="2" fill="none"/></svg>
<svg class="r" style="left:95px;top:103px;" width="40" height="28" viewBox="0 0 40 28"><rect x="1" y="1" width="37" height="26" rx="1.5" fill="#d5dce2"/><path d="M1.5 3 L19.5 16 L37.5 3" stroke="#7d8891" stroke-width="2" fill="none"/></svg>
<svg class="r" style="left:164px;top:93px;" width="50" height="50" viewBox="0 0 50 50"><path d="M20 12 L40 8 Q44 8 44 12 L40 31 L19 46 Q17 48 15 46 L3 33 Q1 31 3 29 Z" fill="#3aa9ea"/>
      <circle cx="36" cy="14" r="3" fill="#f0f0f0"/>
      <path d="M35 14 Q30 3 38 2.5 Q45 3 42 14" stroke="#3aa9ea" stroke-width="3" fill="none"/><path d="M37 17 Q46 12 44 5" stroke="#3aa9ea" stroke-width="3" fill="none"/></svg>
<svg class="r" style="left:245px;top:100px;" width="45" height="37" viewBox="0 0 45 37"><rect x="1.5" y="1" width="33" height="23" rx="1.5" fill="#d9e8f2" stroke="#8d9eab" stroke-width="1.2"/>
      <rect x="10" y="10" width="33" height="24" rx="1.5" fill="#cfe2f0" stroke="#7d8e9c" stroke-width="1.4"/>
      <rect x="13" y="14" width="12" height="15" fill="#a9b8c0"/><circle cx="19" cy="20" r="3.5" fill="#c9a890"/><path d="M14 28 Q19 22 24 28 Z" fill="#6d7d85"/>
      <rect x="28" y="17" width="12" height="2" fill="#7aa0c0"/><rect x="28" y="22" width="12" height="2" fill="#7aa0c0"/></svg>
<svg class="r" style="left:308px;top:94px;" width="48" height="46" viewBox="0 0 48 46"><rect x="6" y="2" width="34" height="32" rx="2" fill="#f6f6f6" stroke="#8a8a8a" stroke-width="1.5"/>
      <path d="M8 8 H38 M8 14 H38 M8 20 H38 M8 26 H38 M14 4 V32 M20 4 V32 M26 4 V32 M32 4 V32" stroke="#d0d0d0" stroke-width="0.8"/>
      <path d="M9 27 L16 18 L22 22 L32 12" stroke="#6080a0" stroke-width="1.5" fill="none"/>
      <path d="M2 32 L10 26 L24 26 L30 32 L30 44 L2 44 Z" fill="#4a9a2a"/><path d="M4 34 H28 M4 39 H28" stroke="#2a6a1a" stroke-width="1.2"/><rect x="13" y="30" width="3" height="14" fill="#e0e0e0"/>
      <rect x="31" y="19" width="14" height="24" rx="3" fill="#d8b830"/><path d="M31 24 H45 M31 29 H45 M31 34 H45 M31 39 H45" stroke="#a88a10" stroke-width="1"/></svg>
<svg class="r" style="left:383px;top:94px;" width="37" height="46" viewBox="0 0 37 46"><path d="M1 1 H34 V40 Q34 43 31 43 H1 Z" fill="#fdfdfd" stroke="#a0a0a0" stroke-width="1.3"/><path d="M5 6 H14 M5 9 H12 M5 12 H14 M22 5 H30 M22 8 H30 M22 11 H28" stroke="#c8c8c8" stroke-width="1"/>
      <rect x="5" y="18" width="25" height="16" fill="#f3e9b8"/><path d="M5 22 H30 M5 26 H30 M5 30 H30 M11 18 V34 M17 18 V34 M23 18 V34" stroke="#d4c890" stroke-width="0.8"/><path d="M22 40 h7" stroke="#5060b0" stroke-width="1.2"/></svg>
<svg class="r" style="left:460px;top:94px;" width="37" height="46" viewBox="0 0 37 46"><path d="M1 1 H34 V40 Q34 43 31 43 H1 Z" fill="#fdfdfd" stroke="#a0a0a0" stroke-width="1.3"/><rect x="3" y="3" width="8" height="4" fill="#e02020"/><path d="M22 5 H30 M22 8 H30" stroke="#c8c8c8" stroke-width="1"/>
      <rect x="5" y="18" width="25" height="14" fill="#f3e9b8"/>
      <text x="18" y="39" text-anchor="middle" font-family="Liberation Sans" font-weight="bold" font-size="48" fill="#1a8a1a">e</text><path d="M22 40 h7" stroke="#5060b0" stroke-width="1.2"/></svg>
<svg class="r" style="left:535px;top:94px;" width="46" height="46" viewBox="0 0 46 46"><path d="M1 1 H34 V40 Q34 43 31 43 H1 Z" fill="#fdfdfd" stroke="#a0a0a0" stroke-width="1.3"/><path d="M5 6 H14 M5 9 H12 M5 12 H14 M22 5 H30 M22 8 H30" stroke="#c8c8c8" stroke-width="1"/><path d="M22 40 h7" stroke="#5060b0" stroke-width="1.2"/>
      <rect x="8" y="19" width="24" height="12" fill="#2a5ab8"/><path d="M32 17 H40 L45 25 V33 H32 Z" fill="#f0b020"/><rect x="35" y="19" width="6" height="5" fill="#404858"/>
      <rect x="8" y="31" width="37" height="3" fill="#404040"/><circle cx="15" cy="35" r="3" fill="#303030"/><circle cx="38" cy="35" r="3" fill="#303030"/></svg>
<svg class="r" style="left:602px;top:99px;" width="47" height="37" viewBox="0 0 47 37"><path d="M3 3 L9 0 H44 L46 2 V31 L40 34 H3 Z" fill="#a8a8a8"/><path d="M3 3 H40 V34 H3 Z" fill="#959595"/><path d="M40 3 L46 0 V31 L40 34 Z" fill="#6e6e6e"/>
      <rect x="13" y="9" width="19" height="18" fill="#1e2a22"/><path d="M13 22 H32 V27 H13 Z" fill="#5a8a4a"/>
      <path d="M30 8 L38 11 V33 L30 29 Z" fill="#a8a8a8"/><circle cx="35" cy="20" r="1.5" fill="#444"/></svg>
<svg class="r" style="left:664px;top:98px;" width="46" height="41" viewBox="0 0 46 41"><path d="M10 2 H34 L44 14 H2 Z" fill="#8a8a8a"/><path d="M10 2 L2 14 H8 L16 4 Z" fill="#a8a8a8"/><path d="M16 7 L22 4 L28 7 V11 H16 Z" fill="#e8e8e8"/>
      <rect x="4" y="14" width="38" height="20" fill="#eef0f4"/><rect x="7" y="16" width="3" height="16" fill="#a8b8d0"/><rect x="13" y="16" width="3" height="16" fill="#a8b8d0"/><rect x="30" y="16" width="3" height="16" fill="#a8b8d0"/><rect x="36" y="16" width="3" height="16" fill="#a8b8d0"/>
      <path d="M19 34 V24 Q23 19 27 24 V34 Z" fill="#e0a030"/><path d="M1 34 H45 L42 39 H4 Z" fill="#c8c8cc"/></svg>
<svg class="r" style="left:728px;top:97px;" width="48" height="41" viewBox="0 0 48 41"><path d="M2 10 L14 1 L44 26 L30 38 Z" fill="#f4f6f8" stroke="#9aa2aa" stroke-width="1.3"/>
      <path d="M2 10 L14 1 L20 6 L7 16 Z" fill="#3a7cc8"/><path d="M2 10 L7 16 V22 L2 15 Z" fill="#2a5ca0"/>
      <path d="M12 18 L30 32 M16 14 L34 28" stroke="#c0c8d0" stroke-width="1"/>
      <path d="M20 30 L46 20" stroke="#505860" stroke-width="2.5"/></svg>
<svg class="r" style="left:1272px;top:93px;" width="46" height="49" viewBox="0 0 46 49"><path d="M3 5 L15 1 L25 4 V40 L15 44 L3 40 Z" fill="#7aaad8"/><path d="M15 1 L25 4 V40 L15 44 Z" fill="#4a80b8"/>
      <path d="M4.5 10 H14 M4.5 14 H14 M4.5 18 H14 M4.5 22 H14 M4.5 26 H14 M4.5 30 H14 M4.5 34 H14" stroke="#d8ecfa" stroke-width="1.6"/>
      <path d="M16.5 9 L23.5 11 M16.5 13 L23.5 15 M16.5 17 L23.5 19 M16.5 21 L23.5 23" stroke="#8ab8e0" stroke-width="1.3"/>
      <path d="M16 29 L32 23 L44 27 V39 L28 46 L16 41 Z" fill="#8ab8e0"/><path d="M28 33 L44 27 V39 L28 46 Z" fill="#5a90c8"/><path d="M16 29 L32 23 L44 27 L28 33 Z" fill="#e4f0fa"/>
      <path d="M30 37 L42 32 M30 41 L42 36" stroke="#c8e0f4" stroke-width="1.5"/><path d="M18 33 L26 36 M18 37 L26 40" stroke="#d8ecfa" stroke-width="1.4"/></svg>
<svg class="r" style="left:787px;top:93px;" width="24" height="23" viewBox="0 0 24 23"><path d="M1 13 L14 2 L20 6 L7 18 Z" fill="#b8bcc0" stroke="#7a8088" stroke-width="1"/><path d="M4 13 L15 4 M7 15 L17 6" stroke="#8a9098" stroke-width="1"/>
      <circle cx="15" cy="16" r="5.5" fill="#a0a4a8" stroke="#707478" stroke-width="1"/></svg>
<svg class="r" style="left:788px;top:128px;" width="22" height="24" viewBox="0 0 22 24"><path d="M1 1 H14 L18 5 V23 H1 Z" fill="#f8f8f8" stroke="#909090" stroke-width="1"/><path d="M3 8 H16 M3 12 H16 M3 16 H16 M3 20 H16 M7 6 V22 M12 6 V22" stroke="#9ab0d0" stroke-width="0.8"/>
      <path d="M10 20 L19 9 L21.5 11 L12.5 22 L9.5 22.5 Z" fill="#e8b040" stroke="#a07020" stroke-width="0.6"/><circle cx="20" cy="9" r="1.5" fill="#d04040"/></svg>
<svg class="r" style="left:786px;top:164px;" width="25" height="25" viewBox="0 0 25 25"><path d="M1 5 L6 1 H24 V19 L19 24 H1 Z" fill="#9a6a3a"/><path d="M1 5 H19 V24 H1 Z" fill="#b88a50"/><path d="M19 5 L24 1 V19 L19 24 Z" fill="#7a5030"/>
      <path d="M1 14 H19 M10 5 V24" stroke="#8a6030" stroke-width="1"/></svg>
<svg class="r" style="left:943px;top:93px;" width="23" height="23" viewBox="0 0 23 23"><path d="M2 10 L8 6 V2 H14 V6 L21 10 V19 L12 22 L2 19 Z" fill="#8a98a8"/><path d="M2 17 L12 21 L21 17 V20 L12 23 L2 20 Z" fill="#b03030"/>
      <rect x="5" y="10" width="4" height="4" fill="#c0d0e0"/><rect x="13" y="10" width="4" height="4" fill="#c0d0e0"/><circle cx="15" cy="15" r="2" fill="#fff"/></svg>
<svg class="r" style="left:942px;top:129px;" width="24" height="23" viewBox="0 0 24 23"><path d="M2 7 L20 2 L22 4 L5 9 Z" fill="#c8d0e0" stroke="#6878a0" stroke-width="0.8"/><path d="M9 4 L12 1 M12 7 L14 9" stroke="#6878a0" stroke-width="1"/>
      <path d="M3 14 L20 12 L22 17 H1 Z" fill="#6878a0"/><path d="M1 17 H22 L19 22 H4 Z" fill="#b03838"/></svg>
<svg class="r" style="left:943px;top:166px;" width="23" height="21" viewBox="0 0 23 21"><circle cx="7" cy="6" r="4" fill="#d8b090" stroke="#8a6040" stroke-width="0.8"/><circle cx="16" cy="6" r="4" fill="#d8a8a0" stroke="#9a5050" stroke-width="0.8"/>
      <path d="M1 20 Q1 11 7 11 Q12 11 12 20 Z" fill="#f0f0f0" stroke="#8a9aaa" stroke-width="0.8"/><path d="M10 20 Q10 11 16 11 Q22 11 22 20 Z" fill="#e8b8b8" stroke="#a07070" stroke-width="0.8"/></svg>
<svg class="r" style="left:1106px;top:107px;" width="24" height="18" viewBox="0 0 24 18"><path d="M8 5 V2 H16 V5" stroke="#222" stroke-width="1.6" fill="none"/><path d="M1 8 Q1 5 4 5 H20 Q23 5 23 8 V16 H1 Z" fill="#1e1e1e"/><path d="M1 10 H23" stroke="#555" stroke-width="1"/><rect x="10" y="9" width="4" height="3" fill="#888"/></svg>
<svg class="r" style="left:1106px;top:153px;" width="24" height="24" viewBox="0 0 24 24"><path d="M14 4 L22 2 L20 12 L14 13 Z" fill="#a8b0b8" stroke="#707880" stroke-width="0.8"/><circle cx="16" cy="15" r="1.3" fill="#555"/><circle cx="20" cy="14" r="1.3" fill="#555"/>
      <circle cx="8" cy="9" r="5" fill="#e0a880"/><path d="M3 8 Q3 2 8 2 Q13 2 13 8" stroke="#6a3a20" stroke-width="2" fill="none"/>
      <path d="M1 23 Q1 14 8 14 Q15 14 15 23 Z" fill="#c04a28"/><path d="M6 15 L8 21 L10 15" fill="#fff"/></svg>
<svg class="r" style="left:10px;top:229px;" width="25" height="25" viewBox="0 0 25 25"><circle cx="12.3" cy="12.3" r="10.3" fill="none" stroke="#4d6d93" stroke-width="1.5"/><path d="M19 12.3 H8 M12.5 7.5 L7.5 12.3 L12.5 17" stroke="#4a7bb8" stroke-width="2.6" fill="none"/></svg>
<svg class="r" style="left:1403px;top:229px;" width="25" height="24" viewBox="0 0 25 24"><path d="M3.5 12 V21 H21.5 V12" fill="#f4f4f4" stroke="#999" stroke-width="0.8"/><path d="M1 13 L12.5 2 L24 13" stroke="#3a3f45" stroke-width="2.2" fill="none"/>
      <rect x="18" y="3" width="3" height="6" fill="#ddd" stroke="#888" stroke-width="0.6"/><rect x="10.5" y="14" width="4.5" height="7" fill="#c8963a"/><rect x="3" y="20.5" width="19" height="2.5" fill="#444"/></svg>
<svg class="r" style="left:8px;top:267px;" width="28" height="32" viewBox="0 0 28 32"><defs><radialGradient id="mg" cx="0.4" cy="0.35" r="0.7"><stop offset="0" stop-color="#fafafa"/><stop offset="1" stop-color="#cfcfcf"/></radialGradient></defs>
      <path d="M16 17 L24 27" stroke="#8a8a8a" stroke-width="3.2" stroke-linecap="round"/><path d="M16 17 L24 27" stroke="#c8c8c8" stroke-width="1.4" stroke-linecap="round"/>
      <circle cx="10.5" cy="11" r="8.5" fill="url(#mg)" stroke="#a0a0a0" stroke-width="1.2"/></svg>
<svg class="r" style="left:12px;top:346px;" width="25" height="27" viewBox="0 0 25 27"><path d="M1 1 H21 L24 4 V25 H1 Z" fill="#8e68b2"/><rect x="8" y="1" width="11" height="7" fill="#6a4590"/><rect x="13" y="2" width="3.5" height="5" fill="#e8dcf0"/>
      <rect x="4" y="13" width="17" height="10" fill="#fff"/></svg>
<svg class="r" style="left:13px;top:383px;" width="23" height="23" viewBox="0 0 23 23"><path d="M2.5 2.5 L20.5 20.5 M20.5 2.5 L2.5 20.5" stroke="#e05c38" stroke-width="3.5"/></svg>
<svg class="r" style="left:11px;top:416px;" width="27" height="27" viewBox="0 0 27 27"><rect x="7" y="1" width="13" height="10" fill="#fff" stroke="#7a7a7a" stroke-width="1"/><rect x="1" y="10" width="25" height="11" rx="1.5" fill="#7a7a7a"/><path d="M6 10.5 H21" stroke="#5a8ac8" stroke-width="1.2"/>
      <rect x="7" y="17" width="13" height="9" fill="#fff" stroke="#7a7a7a" stroke-width="1"/><path d="M9.5 20.5 H17.5 M9.5 23 H17.5" stroke="#5a8ac8" stroke-width="1.2"/></svg>
<svg class="r" style="left:11px;top:451px;" width="27" height="27" viewBox="0 0 27 27"><rect x="7" y="1" width="13" height="10" fill="#fff" stroke="#7a7a7a" stroke-width="1"/><rect x="1" y="10" width="25" height="11" rx="1.5" fill="#7a7a7a"/><path d="M6 10.5 H21" stroke="#5a8ac8" stroke-width="1.2"/>
      <rect x="7" y="17" width="13" height="9" fill="#fff" stroke="#7a7a7a" stroke-width="1"/><path d="M9.5 20.5 H17.5 M9.5 23 H17.5" stroke="#5a8ac8" stroke-width="1.2"/></svg>
<svg class="r" style="left:12px;top:486px;" width="24" height="26" viewBox="0 0 24 26"><path d="M3 1 H8 V5 H9 V10 H10 V25 H1 V10 H2 V5 H3 Z" fill="#3a78c0"/><path d="M13 1 H18 V5 H19 V10 H20 V25 H11 V10 H12 V5 H13 Z" fill="#3a78c0"/>
      <rect x="8" y="10" width="5" height="8" fill="#3a78c0"/><path d="M3 12 V24 M18 12 V24" stroke="#7ab0e8" stroke-width="1"/></svg>
<svg class="r" style="left:10px;top:520px;" width="29" height="29" viewBox="0 0 29 29"><circle cx="14.5" cy="14.5" r="13" fill="#fff" stroke="#4e5f6e" stroke-width="1.8"/><path d="M12.5 6 H16.5 V14 H21.5 L14.5 22 L7.5 14 H12.5 Z" fill="#3a7ac8"/></svg>
<div class="r" style="left:44px;top:964px;width:73px;height:30px;background:#ebebeb;border:1px solid #b8b8b8"></div>
<div class="r" style="left:91px;top:965px;width:1px;height:28px;background:#c4c4c4"></div>
<svg class="r" style="left:98px;top:975px;" width="11" height="7" viewBox="0 0 11 7"><path d="M1 1 L5.5 5.5 L10 1" stroke="#888" stroke-width="2" fill="none"/></svg>
<div class="t" style="left:46.5px;top:971.73px;font-size:14.5px;color:#333;">2018</div>
<svg class="r" style="left:145px;top:963px;" width="28" height="30" viewBox="0 0 28 30"><circle cx="10" cy="10" r="8" fill="#f0c8a0" stroke="#d08050" stroke-width="1.5"/><text x="10" y="14" text-anchor="middle" font-family="Liberation Sans" font-weight="bold" font-size="10" fill="#d07030">€</text>
      <circle cx="18" cy="18" r="8" fill="#7ac050" stroke="#4a9030" stroke-width="1.5"/><text x="18" y="22" text-anchor="middle" font-family="Liberation Sans" font-weight="bold" font-size="11" fill="#1a5010">$</text></svg>
<div class="r" style="left:225px;top:987px;width:8px;height:1px;background:#333"></div>
<svg class="r" style="left:314px;top:457px;" width="22" height="17" viewBox="0 0 22 17"><defs><clipPath id="fc0"><rect width="22" height="17" rx="1.5"/></clipPath><linearGradient id="fg0" x1="0" y1="0" x2="0" y2="1"><stop offset="0" stop-color="#fff" stop-opacity="0.25"/><stop offset="0.5" stop-color="#fff" stop-opacity="0.05"/><stop offset="1" stop-color="#000" stop-opacity="0.08"/></linearGradient></defs><g clip-path="url(#fc0)"><rect width="22" height="17" fill="#fff"/><rect x="0" y="0.00" width="22" height="1.21" fill="#c8313e"/><rect x="0" y="2.43" width="22" height="1.21" fill="#c8313e"/><rect x="0" y="4.86" width="22" height="1.21" fill="#c8313e"/><rect x="0" y="7.29" width="22" height="1.21" fill="#c8313e"/><rect x="0" y="9.71" width="22" height="1.21" fill="#c8313e"/><rect x="0" y="12.14" width="22" height="1.21" fill="#c8313e"/><rect x="0" y="14.57" width="22" height="1.21" fill="#c8313e"/><rect x="0" y="0" width="9.5" height="8" fill="#3b3b6d"/><rect width="22" height="17" fill="url(#fg0)"/></g></svg>
<svg class="r" style="left:314px;top:483px;" width="22" height="17" viewBox="0 0 22 17"><defs><clipPath id="fc1"><rect width="22" height="17" rx="1.5"/></clipPath><linearGradient id="fg1" x1="0" y1="0" x2="0" y2="1"><stop offset="0" stop-color="#fff" stop-opacity="0.25"/><stop offset="0.5" stop-color="#fff" stop-opacity="0.05"/><stop offset="1" stop-color="#000" stop-opacity="0.08"/></linearGradient></defs><g clip-path="url(#fc1)"><rect width="22" height="17" fill="#1d3c94"/><circle cx="11" cy="8.5" r="5" fill="none" stroke="#e8d040" stroke-width="0.9" stroke-dasharray="1 1.6"/><rect width="22" height="17" fill="url(#fg1)"/></g></svg>
<svg class="r" style="left:314px;top:509px;" width="22" height="17" viewBox="0 0 22 17"><defs><clipPath id="fc2"><rect width="22" height="17" rx="1.5"/></clipPath><linearGradient id="fg2" x1="0" y1="0" x2="0" y2="1"><stop offset="0" stop-color="#fff" stop-opacity="0.25"/><stop offset="0.5" stop-color="#fff" stop-opacity="0.05"/><stop offset="1" stop-color="#000" stop-opacity="0.08"/></linearGradient></defs><g clip-path="url(#fc2)"><rect width="22" height="17" fill="#1e2a7a"/><path d="M0 0 L9 7 M9 0 L0 7" stroke="#fff" stroke-width="1.6"/><path d="M4.5 0 V7 M0 3.5 H9" stroke="#fff" stroke-width="2.2"/><path d="M4.5 0 V7 M0 3.5 H9" stroke="#d02030" stroke-width="1.2"/><circle cx="5" cy="12" r="1.5" fill="#fff"/><circle cx="16" cy="5" r="0.9" fill="#fff"/><circle cx="18" cy="10" r="0.9" fill="#fff"/><circle cx="15" cy="13" r="0.9" fill="#fff"/><rect width="22" height="17" fill="url(#fg2)"/></g></svg>
<svg class="r" style="left:314px;top:535px;" width="22" height="17" viewBox="0 0 22 17"><defs><clipPath id="fc3"><rect width="22" height="17" rx="1.5"/></clipPath><linearGradient id="fg3" x1="0" y1="0" x2="0" y2="1"><stop offset="0" stop-color="#fff" stop-opacity="0.25"/><stop offset="0.5" stop-color="#fff" stop-opacity="0.05"/><stop offset="1" stop-color="#000" stop-opacity="0.08"/></linearGradient></defs><g clip-path="url(#fc3)"><rect width="22" height="17" fill="#d0303a"/><rect x="6.5" y="0" width="3" height="17" fill="#fff"/><rect x="0" y="7" width="22" height="3" fill="#fff"/><rect width="22" height="17" fill="url(#fg3)"/></g></svg>
<svg class="r" style="left:314px;top:561px;" width="22" height="17" viewBox="0 0 22 17"><defs><clipPath id="fc4"><rect width="22" height="17" rx="1.5"/></clipPath><linearGradient id="fg4" x1="0" y1="0" x2="0" y2="1"><stop offset="0" stop-color="#fff" stop-opacity="0.25"/><stop offset="0.5" stop-color="#fff" stop-opacity="0.05"/><stop offset="1" stop-color="#000" stop-opacity="0.08"/></linearGradient></defs><g clip-path="url(#fc4)"><rect width="22" height="17" fill="#223070"/><path d="M0 0 L22 17 M22 0 L0 17" stroke="#fff" stroke-width="3"/><path d="M0 0 L22 17 M22 0 L0 17" stroke="#c82030" stroke-width="1.2"/><path d="M11 0 V17 M0 8.5 H22" stroke="#fff" stroke-width="4.5"/><path d="M11 0 V17 M0 8.5 H22" stroke="#c82030" stroke-width="2.5"/><rect width="22" height="17" fill="url(#fg4)"/></g></svg>
<svg class="r" style="left:314px;top:587px;" width="22" height="17" viewBox="0 0 22 17"><defs><clipPath id="fc5"><rect width="22" height="17" rx="1.5"/></clipPath><linearGradient id="fg5" x1="0" y1="0" x2="0" y2="1"><stop offset="0" stop-color="#fff" stop-opacity="0.25"/><stop offset="0.5" stop-color="#fff" stop-opacity="0.05"/><stop offset="1" stop-color="#000" stop-opacity="0.08"/></linearGradient></defs><g clip-path="url(#fc5)"><rect width="22" height="17" fill="#d8202a"/><rect x="9.5" y="3.5" width="3" height="10" fill="#fff"/><rect x="6" y="7" width="10" height="3" fill="#fff"/><rect width="22" height="17" fill="url(#fg5)"/></g></svg>
<svg class="r" style="left:314px;top:613px;" width="22" height="17" viewBox="0 0 22 17"><defs><clipPath id="fc6"><rect width="22" height="17" rx="1.5"/></clipPath><linearGradient id="fg6" x1="0" y1="0" x2="0" y2="1"><stop offset="0" stop-color="#fff" stop-opacity="0.25"/><stop offset="0.5" stop-color="#fff" stop-opacity="0.05"/><stop offset="1" stop-color="#000" stop-opacity="0.08"/></linearGradient></defs><g clip-path="url(#fc6)"><rect width="22" height="17" fill="#2a68b0"/><rect x="6.5" y="0" width="3" height="17" fill="#f0c820"/><rect x="0" y="7" width="22" height="3" fill="#f0c820"/><rect width="22" height="17" fill="url(#fg6)"/></g></svg>
<svg class="r" style="left:314px;top:639px;" width="22" height="17" viewBox="0 0 22 17"><defs><clipPath id="fc7"><rect width="22" height="17" rx="1.5"/></clipPath><linearGradient id="fg7" x1="0" y1="0" x2="0" y2="1"><stop offset="0" stop-color="#fff" stop-opacity="0.25"/><stop offset="0.5" stop-color="#fff" stop-opacity="0.05"/><stop offset="1" stop-color="#000" stop-opacity="0.08"/></linearGradient></defs><g clip-path="url(#fc7)"><rect width="22" height="17" fill="#fff"/><rect width="5.5" height="17" fill="#d82030"/><rect x="16.5" width="5.5" height="17" fill="#d82030"/><path d="M11 4 L12.5 7 L14.5 6.5 L13.5 10 L15 11 L11 12.5 L7 11 L8.5 10 L7.5 6.5 L9.5 7 Z" fill="#d82030"/><rect width="22" height="17" fill="url(#fg7)"/></g></svg>
<svg class="r" style="left:314px;top:665px;" width="22" height="17" viewBox="0 0 22 17"><defs><clipPath id="fc8"><rect width="22" height="17" rx="1.5"/></clipPath><linearGradient id="fg8" x1="0" y1="0" x2="0" y2="1"><stop offset="0" stop-color="#fff" stop-opacity="0.25"/><stop offset="0.5" stop-color="#fff" stop-opacity="0.05"/><stop offset="1" stop-color="#000" stop-opacity="0.08"/></linearGradient></defs><g clip-path="url(#fc8)"><rect width="22" height="5.7" fill="#2a8a3a"/><rect y="5.7" width="22" height="5.7" fill="#fff"/><rect y="11.4" width="22" height="5.6" fill="#d02030"/><path d="M0 0 L6 5 V12 L0 17 Z" fill="#111"/><rect width="22" height="17" fill="url(#fg8)"/></g></svg>
<svg class="r" style="left:314px;top:691px;" width="22" height="17" viewBox="0 0 22 17"><defs><clipPath id="fc9"><rect width="22" height="17" rx="1.5"/></clipPath><linearGradient id="fg9" x1="0" y1="0" x2="0" y2="1"><stop offset="0" stop-color="#fff" stop-opacity="0.25"/><stop offset="0.5" stop-color="#fff" stop-opacity="0.05"/><stop offset="1" stop-color="#000" stop-opacity="0.08"/></linearGradient></defs><g clip-path="url(#fc9)"><rect width="22" height="17" fill="#c8202e"/><rect x="5.5" y="0" width="5" height="17" fill="#fff"/><rect x="0" y="6" width="22" height="5" fill="#fff"/><rect x="6.8" y="0" width="2.4" height="17" fill="#1e2a6a"/><rect x="0" y="7.3" width="22" height="2.4" fill="#1e2a6a"/><rect width="22" height="17" fill="url(#fg9)"/></g></svg>
<svg class="r" style="left:314px;top:717px;" width="22" height="17" viewBox="0 0 22 17"><defs><clipPath id="fc10"><rect width="22" height="17" rx="1.5"/></clipPath><linearGradient id="fg10" x1="0" y1="0" x2="0" y2="1"><stop offset="0" stop-color="#fff" stop-opacity="0.25"/><stop offset="0.5" stop-color="#fff" stop-opacity="0.05"/><stop offset="1" stop-color="#000" stop-opacity="0.08"/></linearGradient></defs><g clip-path="url(#fc10)"><rect width="22" height="17" fill="#1f6a2a"/><path d="M6 6 H16 M6 8 H15" stroke="#d8e8d0" stroke-width="0.9"/><path d="M6 12 H16" stroke="#e8f0e0" stroke-width="1"/><rect width="22" height="17" fill="url(#fg10)"/></g></svg>
<svg class="r" style="left:314px;top:743px;" width="22" height="17" viewBox="0 0 22 17"><defs><clipPath id="fc11"><rect width="22" height="17" rx="1.5"/></clipPath><linearGradient id="fg11" x1="0" y1="0" x2="0" y2="1"><stop offset="0" stop-color="#fff" stop-opacity="0.25"/><stop offset="0.5" stop-color="#fff" stop-opacity="0.05"/><stop offset="1" stop-color="#000" stop-opacity="0.08"/></linearGradient></defs><g clip-path="url(#fc11)"><rect width="22" height="17" fill="#fff" stroke="#ccc" stroke-width="0.8"/><circle cx="11" cy="8.5" r="4.3" fill="#d01020"/><rect width="22" height="17" fill="url(#fg11)"/></g></svg>
<svg class="r" style="left:314px;top:769px;" width="22" height="17" viewBox="0 0 22 17"><defs><clipPath id="fc12"><rect width="22" height="17" rx="1.5"/></clipPath><linearGradient id="fg12" x1="0" y1="0" x2="0" y2="1"><stop offset="0" stop-color="#fff" stop-opacity="0.25"/><stop offset="0.5" stop-color="#fff" stop-opacity="0.05"/><stop offset="1" stop-color="#000" stop-opacity="0.08"/></linearGradient></defs><g clip-path="url(#fc12)"><rect width="22" height="5.7" fill="#fff"/><rect y="5.7" width="22" height="5.7" fill="#2a9a50"/><rect y="11.4" width="22" height="5.6" fill="#d02a20"/><rect width="22" height="17" fill="url(#fg12)"/></g></svg>
<svg class="r" style="left:314px;top:795px;" width="22" height="17" viewBox="0 0 22 17"><defs><clipPath id="fc13"><rect width="22" height="17" rx="1.5"/></clipPath><linearGradient id="fg13" x1="0" y1="0" x2="0" y2="1"><stop offset="0" stop-color="#fff" stop-opacity="0.25"/><stop offset="0.5" stop-color="#fff" stop-opacity="0.05"/><stop offset="1" stop-color="#000" stop-opacity="0.08"/></linearGradient></defs><g clip-path="url(#fc13)"><rect width="7.3" height="17" fill="#1a2a90"/><rect x="7.3" width="7.4" height="17" fill="#f0d020"/><rect x="14.7" width="7.3" height="17" fill="#d02030"/><rect width="22" height="17" fill="url(#fg13)"/></g></svg>
<svg class="r" style="left:314px;top:821px;" width="22" height="17" viewBox="0 0 22 17"><defs><clipPath id="fc14"><rect width="22" height="17" rx="1.5"/></clipPath><linearGradient id="fg14" x1="0" y1="0" x2="0" y2="1"><stop offset="0" stop-color="#fff" stop-opacity="0.25"/><stop offset="0.5" stop-color="#fff" stop-opacity="0.05"/><stop offset="1" stop-color="#000" stop-opacity="0.08"/></linearGradient></defs><g clip-path="url(#fc14)"><rect width="22" height="5.7" fill="#fff"/><rect y="5.7" width="22" height="5.7" fill="#2050b0"/><rect y="11.4" width="22" height="5.6" fill="#d02020"/><rect width="22" height="17" fill="url(#fg14)"/></g></svg>
<svg class="r" style="left:314px;top:847px;" width="22" height="17" viewBox="0 0 22 17"><defs><clipPath id="fc15"><rect width="22" height="17" rx="1.5"/></clipPath><linearGradient id="fg15" x1="0" y1="0" x2="0" y2="1"><stop offset="0" stop-color="#fff" stop-opacity="0.25"/><stop offset="0.5" stop-color="#fff" stop-opacity="0.05"/><stop offset="1" stop-color="#000" stop-opacity="0.08"/></linearGradient></defs><g clip-path="url(#fc15)"><rect width="22" height="5.7" fill="#2a9a4a"/><rect y="5.7" width="22" height="5.7" fill="#fff"/><rect y="11.4" width="22" height="5.6" fill="#d03030"/><circle cx="11" cy="8.5" r="1.6" fill="#d03030"/><rect width="22" height="17" fill="url(#fg15)"/></g></svg>
<svg class="r" style="left:314px;top:873px;" width="22" height="17" viewBox="0 0 22 17"><defs><clipPath id="fc16"><rect width="22" height="17" rx="1.5"/></clipPath><linearGradient id="fg16" x1="0" y1="0" x2="0" y2="1"><stop offset="0" stop-color="#fff" stop-opacity="0.25"/><stop offset="0.5" stop-color="#fff" stop-opacity="0.05"/><stop offset="1" stop-color="#000" stop-opacity="0.08"/></linearGradient></defs><g clip-path="url(#fc16)"><rect width="22" height="17" fill="#e02a1a"/><circle cx="5" cy="5" r="2" fill="#f0d020"/><rect width="22" height="17" fill="url(#fg16)"/></g></svg>
<svg class="r" style="left:314px;top:899px;" width="22" height="17" viewBox="0 0 22 17"><defs><clipPath id="fc17"><rect width="22" height="17" rx="1.5"/></clipPath><linearGradient id="fg17" x1="0" y1="0" x2="0" y2="1"><stop offset="0" stop-color="#fff" stop-opacity="0.25"/><stop offset="0.5" stop-color="#fff" stop-opacity="0.05"/><stop offset="1" stop-color="#000" stop-opacity="0.08"/></linearGradient></defs><g clip-path="url(#fc17)"><rect width="22" height="17" fill="#1a5a2a"/><rect width="5.5" height="17" fill="#fff"/><circle cx="13.5" cy="8.5" r="4.8" fill="#fff"/><circle cx="15" cy="7.5" r="4.3" fill="#1a5a2a"/><circle cx="17" cy="5.5" r="1" fill="#fff"/><rect width="22" height="17" fill="url(#fg17)"/></g></svg>
<svg class="r" style="left:296px;top:415px;" width="12" height="12" viewBox="0 0 12 12"><path d="M6 1 V11 M1.5 3.5 L10.5 8.5 M10.5 3.5 L1.5 8.5" stroke="#999" stroke-width="1.8"/></svg>
<div class="r" style="left:496px;top:271px;width:199px;height:341px;border:10px solid #dcff76;border-bottom-width:9px;mix-blend-mode:multiply"></div>
<div class="r" style="left:5px;top:514px;width:278px;height:42px;border:10px solid #dcff76;mix-blend-mode:multiply"></div>
</body></html>
